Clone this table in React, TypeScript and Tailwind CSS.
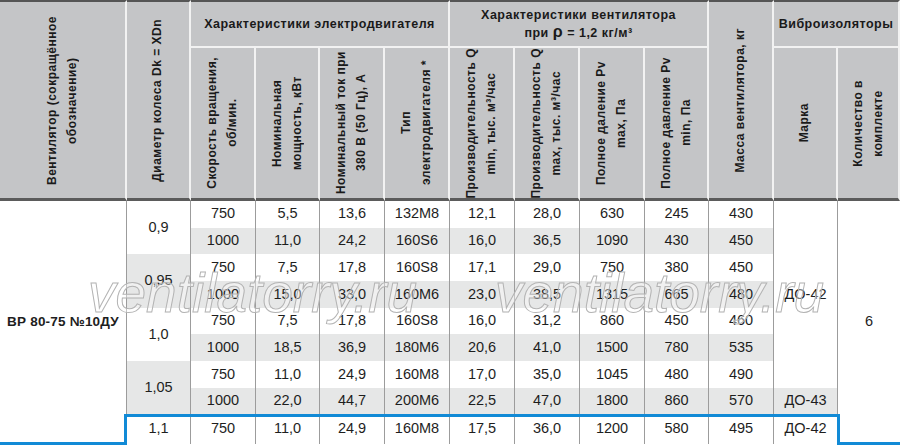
import React from 'react';

// fan spec table, one model with several wheel diameters
const rows: string[][] = [
  ['750', '5,5', '13,6', '132M8', '12,1', '28,0', '630', '245', '430'],
  ['1000', '11,0', '24,2', '160S6', '16,0', '36,5', '1090', '430', '450'],
  ['750', '7,5', '17,8', '160S8', '17,1', '29,0', '750', '380', '450'],
  ['1000', '15,0', '33,0', '160M6', '23,0', '38,5', '1315', '665', '480'],
  ['750', '7,5', '17,8', '160S8', '16,0', '31,2', '860', '450', '460'],
  ['1000', '18,5', '36,9', '180M6', '20,6', '41,0', '1500', '780', '535'],
  ['750', '11,0', '24,9', '160M8', '17,0', '35,0', '1045', '480', '490'],
  ['1000', '22,0', '44,7', '200M6', '22,5', '47,0', '1800', '860', '570'],
  ['750', '11,0', '24,9', '160M8', '17,5', '36,0', '1200', '580', '495'],
];

const diameters: Record<number, { value: string; span: number; gray: boolean }> = {
  0: { value: '0,9', span: 2, gray: false },
  2: { value: '0,95', span: 2, gray: true },
  4: { value: '1,0', span: 2, gray: false },
  6: { value: '1,05', span: 2, gray: true },
  8: { value: '1,1', span: 1, gray: false },
};

const subHeaders: string[][] = [
  ['Скорость вращения,', 'об/мин.'],
  ['Номинальная', 'мощность, кВт'],
  ['Номинальный ток при', '380 В (50 Гц), А'],
  ['Тип', 'электродвигателя *'],
  ['Производительность Q', 'min, тыс. м³/час'],
  ['Производительность Q', 'max, тыс. м³/час'],
  ['Полное даление Pv', 'max, Па'],
  ['Полное давление Pv', 'min, Па'],
];

const colWidths = [
  'w-[127px]', 'w-[64px]', 'w-[65px]', 'w-[64px]', 'w-[65px]', 'w-[65px]', 'w-[65px]',
  'w-[65px]', 'w-[65px]', 'w-[64px]', 'w-[65px]', 'w-[64px]', 'w-[62px]',
];

const VerticalText: React.FC<{ lines: string[]; height: number }> = ({ lines, height }) => (
  <div className="flex items-center justify-center" style={{ height }}>
    <div className="[writing-mode:vertical-rl] rotate-180 whitespace-nowrap text-center leading-[19.5px]">
      {lines.map((line, i) => (
        <div key={i}>{line}</div>
      ))}
    </div>
  </div>
);

const thTop = 'border-t-2 border-t-[#555555]';
const thBottom = 'border-b-[3px] border-b-[#5b5b5b]';
const th = 'bg-[#c4c5c7] border-r-2 border-r-[#f2f2f2] p-0 align-middle font-bold text-[#1a1a1a]';
const td = 'border-r border-r-[#9c9c9c] p-0 text-center align-middle';

export default function App() {
  return (
    <div className="relative h-[445px] w-[900px] overflow-hidden bg-white">
      <table className="w-[900px] table-fixed border-separate border-spacing-0">
        <colgroup>
          {colWidths.map((w, i) => (
            <col key={i} className={w} />
          ))}
        </colgroup>
        <thead className="font-['Liberation_Sans',Arial,sans-serif] text-[12px] tracking-[0.5px]">
          <tr>
            <th rowSpan={2} className={`${th} ${thTop} ${thBottom}`}>
              <VerticalText lines={['Вентилятор (сокращённое', 'обозначение)']} height={196} />
            </th>
            <th rowSpan={2} className={`${th} ${thTop} ${thBottom}`}>
              <VerticalText lines={['Диаметр колеса Dk = XDn']} height={196} />
            </th>
            <th colSpan={4} className={`${th} ${thTop} h-[48px] border-b-2 border-b-[#f2f2f2] text-[12.5px]`}>
              Характеристики электродвигателя
            </th>
            <th colSpan={4} className={`${th} ${thTop} h-[48px] border-b-2 border-b-[#f2f2f2] text-[12.5px] leading-[18px]`}>
              <div>Характеристики вентилятора</div>
              <div>
                при <span className="text-[16px] leading-none">ρ</span> = 1,2 кг/м³
              </div>
            </th>
            <th rowSpan={2} className={`${th} ${thTop} ${thBottom}`}>
              <VerticalText lines={['Масса вентилятора, кг']} height={196} />
            </th>
            <th colSpan={2} className={`${th} ${thTop} h-[48px] border-b-2 border-b-[#f2f2f2] border-r-0 text-[12.5px]`}>
              Виброизоляторы
            </th>
          </tr>
          <tr>
            {subHeaders.map((lines, i) => (
              <th key={i} className={`${th} ${thBottom}`}>
                <VerticalText lines={lines} height={148} />
              </th>
            ))}
            <th className={`${th} ${thBottom}`}>
              <VerticalText lines={['Марка']} height={148} />
            </th>
            <th className={`${th} ${thBottom} border-r-0`}>
              <VerticalText lines={['Количество в', 'комплекте']} height={148} />
            </th>
          </tr>
        </thead>
        <tbody className="font-['Liberation_Sans',Arial,sans-serif] text-[14.5px] text-[#1e1e1e]">
          {rows.map((row, i) => {
            const gray = i % 2 === 1;
            const d = diameters[i];
            return (
              <tr key={i} className={i === 8 ? 'h-[29px]' : 'h-[26.7px]'}>
                {i === 0 && (
                  <td rowSpan={9} className={`${td} text-[13.5px] font-bold tracking-[0.2px]`}>
                    ВР 80-75 №10ДУ
                  </td>
                )}
                {d && (
                  <td rowSpan={d.span} className={`${td} ${d.gray ? 'bg-[#e6e7e7]' : 'bg-white'}`}>
                    {d.value}
                  </td>
                )}
                {row.map((cell, j) => (
                  <td key={j} className={`${td} ${gray ? 'bg-[#e6e7e7]' : 'bg-white'}`}>
                    {cell}
                  </td>
                ))}
                {i === 0 && (
                  <td rowSpan={7} className={`${td} bg-white`}>
                    ДО-42
                  </td>
                )}
                {i === 7 && <td className={`${td} bg-[#e6e7e7]`}>ДО-43</td>}
                {i === 8 && <td className={`${td} bg-white`}>ДО-42</td>}
                {i === 0 && (
                  <td rowSpan={9} className="bg-white p-0 text-center align-middle">
                    6
                  </td>
                )}
              </tr>
            );
          })}
        </tbody>
      </table>

      {/* watermark */}
      <span className="pointer-events-none absolute left-[88px] top-[266px] font-['Liberation_Sans',sans-serif] text-[55px] italic leading-none text-white/40 [-webkit-text-stroke:1px_#b3b3b3]">
        ventilatorry.ru
      </span>
      <span className="pointer-events-none absolute left-[495px] top-[266px] font-['Liberation_Sans',sans-serif] text-[55px] italic leading-none text-white/40 [-webkit-text-stroke:1px_#b3b3b3]">
        ventilatorry.ru
      </span>

      {/* highlighted row outline */}
      <div className="pointer-events-none absolute left-[124px] top-[414px] h-[31px] w-[716px] border-[3px] border-b-0 border-[#118ad6]" />
      <div className="pointer-events-none absolute bottom-0 left-0 h-[3px] w-[127px] bg-[#118ad6]" />
      <div className="pointer-events-none absolute bottom-0 left-[837px] right-0 h-[3px] bg-[#118ad6]" />
    </div>
  );
}
